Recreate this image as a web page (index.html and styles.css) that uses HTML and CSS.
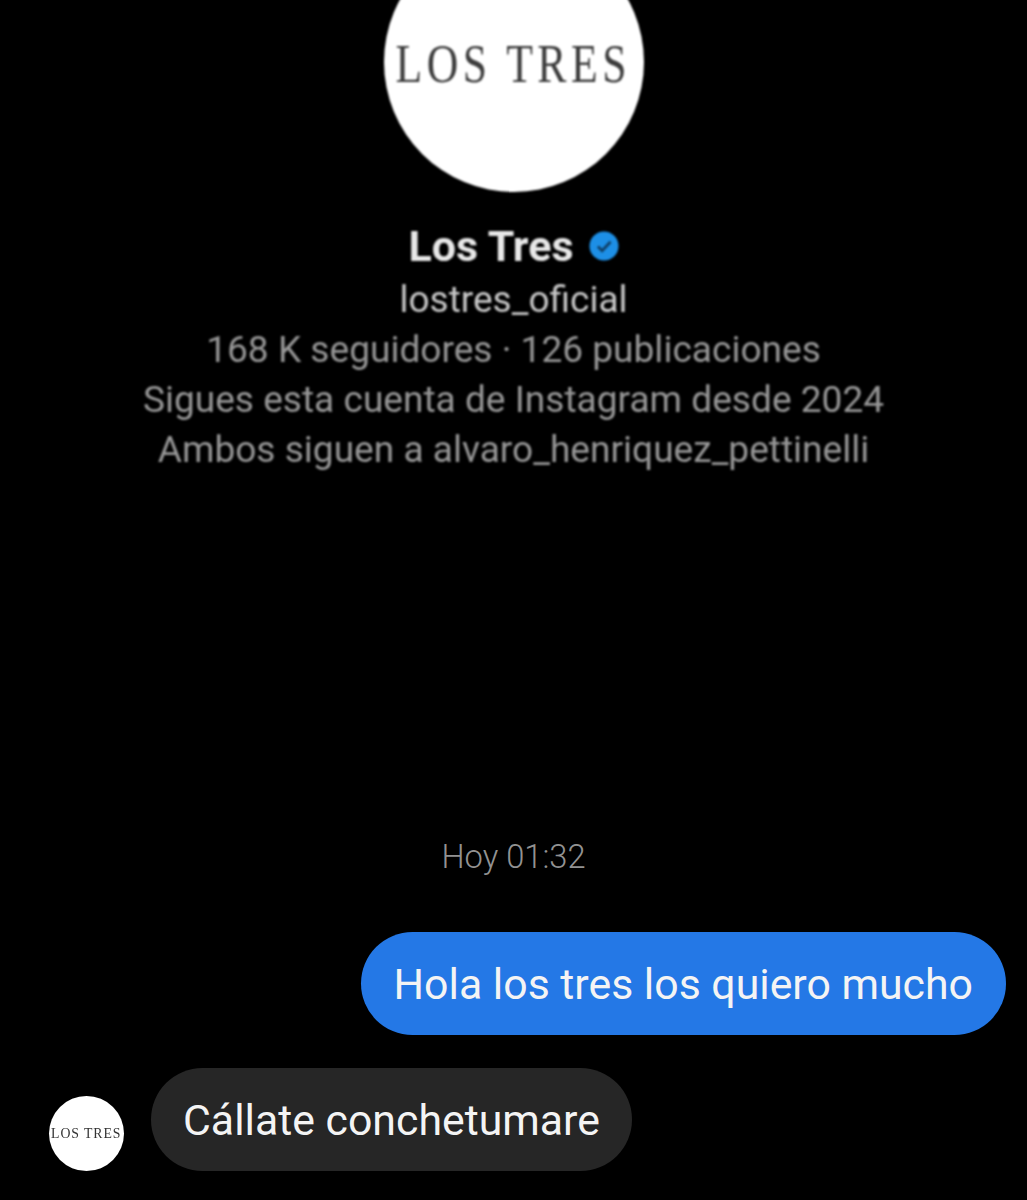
FILE: index.html
```html
<!DOCTYPE html>
<html lang="es">
<head>
<meta charset="utf-8">
<title>Los Tres</title>
<link rel="stylesheet" href="styles.css">
</head>
<body>
<main class="chat">
  <section class="profile">
    <div class="avatar-large"><span class="logo-large">LOS TRES</span></div>
    <div class="name-row">
      <h1 class="name">Los Tres</h1>
      <svg class="verified" viewBox="0 0 32 32" aria-hidden="true">
        <circle cx="16" cy="16" r="15.5" fill="#1d8fe6"/>
        <path d="M9.5 16.5l4.5 4.5 9-9.5" fill="none" stroke="#0f3f66" stroke-width="3"/>
      </svg>
    </div>
    <p class="handle">lostres_oficial</p>
    <p class="meta">168 K seguidores · 126 publicaciones</p>
    <p class="meta">Sigues esta cuenta de Instagram desde 2024</p>
    <p class="meta">Ambos siguen a alvaro_henriquez_pettinelli</p>
  </section>
  <p class="time">Hoy 01:32</p>
  <div class="row-out"><div class="bubble bubble-out">Hola los tres los quiero mucho</div></div>
  <div class="row-in">
    <div class="avatar-small"><span class="logo-small">LOS TRES</span></div>
    <div class="bubble bubble-in">Cállate conchetumare</div>
  </div>
</main>
</body>
</html>
```
FILE: styles.css
```css
* { box-sizing: border-box; }
html, body { margin: 0; padding: 0; background: #000; }
body { height: 1200px; overflow: hidden; font-family: Roboto, "Liberation Sans", sans-serif; }
.chat { display: flex; flex-direction: column; width: 1027px; }
.profile { display: flex; flex-direction: column; align-items: center; margin-top: -68px; filter: blur(1px); }
.avatar-large { width: 260px; height: 260px; border-radius: 50%; background: #fff; display: flex; align-items: center; justify-content: center; }
.logo-large { font-family: "Liberation Serif", serif; font-size: 54px; letter-spacing: 5.5px; color: #3c3c3c; white-space: nowrap; transform: scaleX(0.81); padding-top: 3px; }
.name-row { display: flex; align-items: center; gap: 15px; margin-top: 30px; height: 48px; }
.name { margin: 0; font-size: 43px; font-weight: 700; color: #e8e8e8; line-height: 48px; }
.verified { width: 30px; height: 30px; }
.handle { margin: 5px 0 0; font-size: 37px; line-height: 50px; color: #c8c8c8; }
.meta { margin: 0; font-size: 37.1px; line-height: 50px; color: #969696; white-space: nowrap; }
.time { margin: 362px 0 0; text-align: center; font-size: 32.7px; line-height: 40px; color: #929292; font-weight: 300; }
.bubble { height: 103px; border-radius: 52px; display: flex; align-items: center; font-size: 42.8px; color: #f4f4f4; white-space: nowrap; }
.row-out { display: flex; justify-content: flex-end; margin-top: 55px; padding-right: 21px; }
.bubble-out { background: #2478e6; padding: 0 33px; }
.row-in { display: flex; align-items: flex-end; margin-top: 33px; padding-left: 49px; gap: 27px; }
.bubble-in { background: #262626; padding: 0 32px; }
.avatar-small { width: 75px; height: 75px; border-radius: 50%; background: #fff; display: flex; align-items: center; justify-content: center; }
.logo-small { font-family: "Liberation Serif", serif; font-size: 15px; letter-spacing: 1px; color: #333; white-space: nowrap; transform: scaleX(0.92); }
```
